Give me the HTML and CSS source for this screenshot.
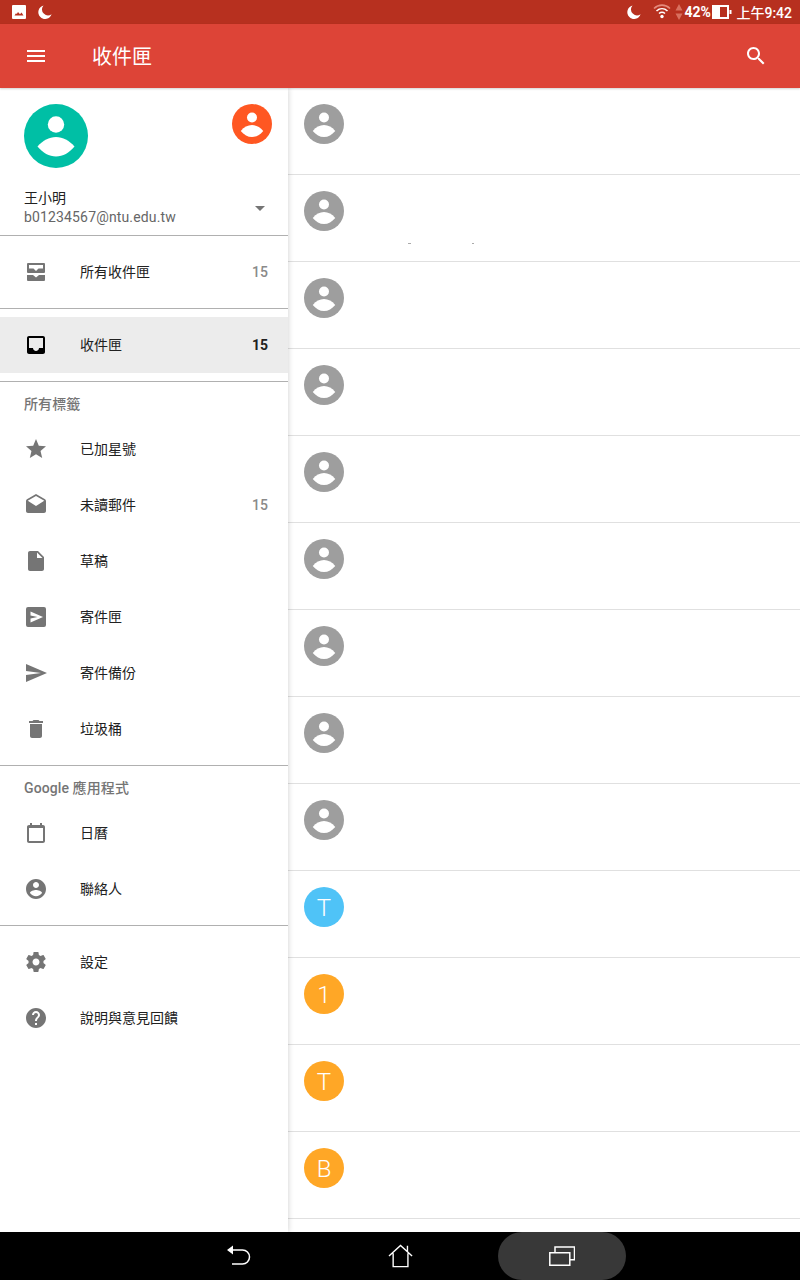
FILE: index.html
```html
<!DOCTYPE html>
<html lang="zh-Hant">
<head>
<meta charset="utf-8">
<title>收件匣</title>
<link rel="stylesheet" href="styles.css">
</head>
<body>
<svg class="defs" aria-hidden="true">
  <symbol id="person" viewBox="0 0 64 64">
    <circle cx="32" cy="20.500" r="8.200" fill="#fff"/>
    <path d="M13.500 42.500C19 36.500 25 33 32 33C39 33 45 36.500 50.500 42.500C45 49 39 52.500 32 52.500C25 52.500 19 49 13.500 42.500Z" fill="#fff"/>
  </symbol>
</svg>
<div class="app">
  <div class="status">
    <div class="status-left">
      <svg class="ico14" viewBox="0 0 14 14"><path fill="#fff" fill-rule="evenodd" d="M1 0h12a1 1 0 0 1 1 1v12a1 1 0 0 1-1 1H1a1 1 0 0 1-1-1V1a1 1 0 0 1 1-1zM2.500 10.500h9L9.500 7.500 8 9.200 6 7 4.800 9 4 8.300z"/></svg>
      <svg class="ico14" viewBox="0 0 14 14"><path fill="#fff" d="M5.500.6A6.800 6.800 0 1 0 13.600 9.300 6 6 0 0 1 5.500.6z"/></svg>
    </div>
    <div class="status-right">
      <svg class="ico14 moon-r" viewBox="0 0 14 14"><path fill="#fff" d="M5.500.6A6.800 6.800 0 1 0 13.600 9.300 6 6 0 0 1 5.500.6z"/></svg>
      <svg class="wifi" width="18" height="16" viewBox="0 0 18 16"><g fill="none" stroke-width="1.600"><path stroke="#e58a7c" d="M1 5.500C5.500 1 12.500 1 17 5.500"/><path stroke="#fff" d="M3.500 8C6.800 5 11.200 5 14.500 8"/><path stroke="#fff" d="M6 10.500C7.800 9 10.200 9 12 10.500"/></g><circle cx="9" cy="13.500" r="1.700" fill="#fff"/></svg>
      <svg class="updown" width="8" height="16" viewBox="0 0 8 16"><path fill="#d9705f" d="M4 0l3.500 6.500H.5zM4 16L.5 9.500h7z"/></svg>
      <span class="pct">42%</span>
      <svg class="batt" width="20" height="14" viewBox="0 0 20 14"><path fill="#fff" fill-rule="evenodd" d="M0 0h17v14H0zM8 2v10h7V2z"/><rect x="17.500" y="5" width="2" height="4" fill="#fff"/></svg>
      <span class="clock">上午9:42</span>
    </div>
  </div>
  <header class="toolbar">
    <svg class="tool-ico" viewBox="0 0 24 24"><path fill="#fff" d="M3 18h18v-2H3v2zm0-5h18v-2H3v2zm0-7v2h18V6H3z"/></svg>
    <h1 class="title">收件匣</h1>
    <svg class="tool-ico search" viewBox="0 0 24 24"><path fill="#fff" d="M15.500 14h-.79l-.28-.27C15.410 12.590 16 11.110 16 9.500 16 5.910 13.090 3 9.500 3S3 5.910 3 9.500 5.910 16 9.500 16c1.610 0 3.090-.59 4.230-1.570l.27.28v.79l5 4.990L20.490 19l-4.990-5zm-6 0C7.010 14 5 11.990 5 9.500S7.010 5 9.500 5 14 7.010 14 9.500 11.990 14 9.500 14z"/></svg>
  </header>
  <main class="body">
    <nav class="drawer">
      <div class="account">
        <div class="avatars">
          <svg class="av av-big teal"><use href="#person"/></svg>
          <svg class="av av-40 deep"><use href="#person"/></svg>
        </div>
        <div class="who">
          <div>
            <div class="name">王小明</div>
            <div class="mail">b01234567@ntu.edu.tw</div>
          </div>
          <span class="caret"></span>
        </div>
      </div>
      <div class="sec">
        <a class="item"><svg class="ni" viewBox="0 0 24 24"><path fill-rule="evenodd" d="M4 3h16a1 1 0 0 1 1 1v8a1 1 0 0 1-1 1H4a1 1 0 0 1-1-1V4a1 1 0 0 1 1-1zm1 2v3.500h4.500L12 11l2.500-2.500H19V5zM3 15h6l3 2.500 3-2.500h6v5a1 1 0 0 1-1 1H4a1 1 0 0 1-1-1z"/></svg><span class="lbl">所有收件匣</span><span class="cnt">15</span></a>
      </div>
      <div class="sec">
        <a class="item on"><svg class="ni" viewBox="0 0 24 24"><path d="M19 3H5c-1.100 0-2 .9-2 2v14c0 1.100.9 2 2 2h14c1.100 0 2-.9 2-2V5c0-1.100-.9-2-2-2zm0 12h-4c0 1.660-1.350 3-3 3s-3-1.340-3-3H5V5h14v10z"/></svg><span class="lbl">收件匣</span><span class="cnt">15</span></a>
      </div>
      <div class="sec sec-h">
        <div class="hd">所有標籤</div>
        <a class="item"><svg class="ni" viewBox="0 0 24 24"><path d="M12 17.270L18.180 21l-1.640-7.030L22 9.240l-7.190-.61L12 2 9.190 8.630 2 9.240l5.460 4.730L5.820 21z"/></svg><span class="lbl">已加星號</span></a>
        <a class="item"><svg class="ni" viewBox="0 0 24 24"><path d="M21.990 8c0-.72-.37-1.350-.94-1.700L12 1 2.950 6.300C2.380 6.650 2 7.280 2 8v10c0 1.100.9 2 2 2h16c1.100 0 2-.9 2-2l-.01-10zM12 13L3.740 7.840 12 3l8.260 4.840L12 13z"/></svg><span class="lbl">未讀郵件</span><span class="cnt">15</span></a>
        <a class="item"><svg class="ni" viewBox="0 0 24 24"><path d="M6 2c-1.100 0-1.990.9-1.990 2L4 20c0 1.100.89 2 1.990 2H18c1.100 0 2-.9 2-2V8l-6-6H6zm7 7V3.500L18.500 9H13z"/></svg><span class="lbl">草稿</span></a>
        <a class="item"><svg class="ni" viewBox="0 0 24 24"><path fill-rule="evenodd" d="M4 2h16a2 2 0 0 1 2 2v16a2 2 0 0 1-2 2H4a2 2 0 0 1-2-2V4a2 2 0 0 1 2-2zm2.500 4.500v4l7 1.500-7 1.500v4L19 12z"/></svg><span class="lbl">寄件匣</span></a>
        <a class="item"><svg class="ni" viewBox="0 0 24 24"><path d="M2.010 21L23 12 2.010 3 2 10l15 2-15 2z"/></svg><span class="lbl">寄件備份</span></a>
        <a class="item"><svg class="ni" viewBox="0 0 24 24"><path d="M6 19c0 1.100.9 2 2 2h8c1.100 0 2-.9 2-2V7H6v12zM19 4h-3.500l-1-1h-5l-1 1H5v2h14V4z"/></svg><span class="lbl">垃圾桶</span></a>
      </div>
      <div class="sec sec-h">
        <div class="hd">Google 應用程式</div>
        <a class="item"><svg class="ni" viewBox="0 0 24 24"><path d="M19 4h-1V2h-2v2H8V2H6v2H5C3.890 4 3 4.900 3 6v14c0 1.100.89 2 2 2h14c1.100 0 2-.9 2-2V6c0-1.100-.9-2-2-2zm0 16H5V7h14v13z"/></svg><span class="lbl">日曆</span></a>
        <a class="item"><svg class="ni" viewBox="0 0 24 24"><path d="M12 2C6.480 2 2 6.480 2 12s4.480 10 10 10 10-4.480 10-10S17.520 2 12 2zm0 3c1.660 0 3 1.340 3 3s-1.340 3-3 3-3-1.340-3-3 1.340-3 3-3zm0 14.200c-2.500 0-4.710-1.280-6-3.220.03-1.990 4-3.080 6-3.080 1.990 0 5.970 1.090 6 3.080-1.290 1.940-3.500 3.220-6 3.220z"/></svg><span class="lbl">聯絡人</span></a>
      </div>
      <div class="sec last">
        <a class="item"><svg class="ni" viewBox="0 0 24 24"><path d="M19.430 12.980c.04-.32.07-.64.07-.98s-.03-.66-.07-.98l2.110-1.650c.19-.15.24-.42.12-.64l-2-3.460c-.12-.22-.39-.3-.61-.22l-2.490 1c-.52-.4-1.080-.73-1.690-.98l-.38-2.650C14.460 2.180 14.250 2 14 2h-4c-.25 0-.46.18-.49.42l-.38 2.650c-.61.25-1.170.59-1.690.98l-2.490-1c-.23-.09-.49 0-.61.22l-2 3.460c-.13.22-.07.49.12.64l2.110 1.650c-.04.32-.07.65-.07.98s.03.66.07.98l-2.110 1.650c-.19.15-.24.42-.12.64l2 3.460c.12.22.39.3.61.22l2.490-1c.52.4 1.080.73 1.690.98l.38 2.650c.03.24.24.42.49.42h4c.25 0 .46-.18.49-.42l.38-2.650c.61-.25 1.170-.59 1.690-.98l2.490 1c.23.09.49 0 .61-.22l2-3.460c.12-.22.07-.49-.12-.64l-2.110-1.650zM12 15.500c-1.930 0-3.500-1.570-3.500-3.500s1.570-3.500 3.500-3.500 3.500 1.570 3.500 3.500-1.570 3.500-3.500 3.500z"/></svg><span class="lbl">設定</span></a>
        <a class="item"><svg class="ni" viewBox="0 0 24 24"><path d="M12 2C6.480 2 2 6.480 2 12s4.480 10 10 10 10-4.480 10-10S17.520 2 12 2zm1 17h-2v-2h2v2zm2.070-7.750l-.9.92C13.450 12.900 13 13.500 13 15h-2v-.5c0-1.100.45-2.100 1.170-2.830l1.240-1.260c.37-.36.59-.86.59-1.410 0-1.100-.9-2-2-2s-2 .9-2 2H8c0-2.210 1.790-4 4-4s4 1.790 4 4c0 .88-.36 1.680-.93 2.250z"/></svg><span class="lbl">說明與意見回饋</span></a>
      </div>
    </nav>
    <section class="list">
      <div class="row"><svg class="av av-40 gray"><use href="#person"/></svg></div>
      <div class="row"><svg class="av av-40 gray"><use href="#person"/></svg><i class="speck s1"></i><i class="speck s2"></i></div>
      <div class="row"><svg class="av av-40 gray"><use href="#person"/></svg></div>
      <div class="row"><svg class="av av-40 gray"><use href="#person"/></svg></div>
      <div class="row"><svg class="av av-40 gray"><use href="#person"/></svg></div>
      <div class="row"><svg class="av av-40 gray"><use href="#person"/></svg></div>
      <div class="row"><svg class="av av-40 gray"><use href="#person"/></svg></div>
      <div class="row"><svg class="av av-40 gray"><use href="#person"/></svg></div>
      <div class="row"><svg class="av av-40 gray"><use href="#person"/></svg></div>
      <div class="row"><span class="av av-40 blue">T</span></div>
      <div class="row"><span class="av av-40 amber">1</span></div>
      <div class="row"><span class="av av-40 amber">T</span></div>
      <div class="row"><span class="av av-40 amber">B</span></div>
      <div class="row"></div>
    </section>
  </main>
  <footer class="navbar">
    <svg class="nb back" width="26" height="26" viewBox="0 0 26 26"><path fill="#fff" d="M1 5l6-4.500v9z"/><path fill="none" stroke="#fff" stroke-width="1.500" d="M6 5h10.500a6.500 6.500 0 0 1 0 14H6"/></svg>
    <svg class="nb home" width="26" height="24" viewBox="0 0 28 26"><path fill="none" stroke="#fff" stroke-width="1.500" d="M1 13L13.500 1.500 26 13M5.500 10v14.500h16V10M21 2v6"/></svg>
    <div class="recent">
      <svg width="26" height="20" viewBox="0 0 26 20"><path fill="none" stroke="#fff" stroke-width="1.500" d="M.8 6.800h20v12.400H.8zM6 6.500V1h19.500v12.800H21"/></svg>
    </div>
  </footer>
</div>
</body>
</html>
```
FILE: styles.css
```css
* { box-sizing: border-box; }
html, body { margin: 0; padding: 0; background: #fff; }
body { font-family: Roboto, "Noto Sans CJK TC", sans-serif; }
.defs { position: absolute; width: 0; height: 0; }
.app { width: 800px; height: 1280px; display: flex; flex-direction: column; overflow: hidden; }

.status { height: 24px; flex: none; background: #b7301f; color: #fff; display: flex; justify-content: space-between; align-items: center; padding: 0 8px 0 12px; }
.status-left { display: flex; gap: 12px; }
.status-right { display: flex; align-items: center; }
.ico14 { width: 14px; height: 14px; display: block; }
.moon-r { margin-right: 12px; }
.wifi { display: block; margin-top: -2px; }
.updown { display: block; margin-left: 4px; }
.pct { font-size: 14px; font-weight: 700; margin-left: 1px; width: 28px; }
.batt { display: block; }
.clock { font-size: 14px; font-weight: 500; margin-left: 4px; margin-bottom: 1px; }

.toolbar { height: 64px; flex: none; background: #dd4437; display: flex; align-items: center; padding: 0 32px 0 24px; position: relative; z-index: 3; box-shadow: 0 1px 2px rgba(0,0,0,.18); }
.tool-ico { width: 24px; height: 24px; display: block; }
.search { margin-left: auto; }
.title { margin: 0 0 2px 44px; font-size: 20px; font-weight: 400; color: #fff; }

.body { flex: 1; min-height: 0; display: flex; overflow: hidden; }
.drawer { width: 288px; flex: none; background: #fff; position: relative; z-index: 2; box-shadow: 0 0 6px rgba(0,0,0,.2); }
.account { height: 148px; padding: 16px 0 0 24px; border-bottom: 1px solid #b0b0b0; }
.avatars { display: flex; justify-content: space-between; align-items: flex-start; padding-right: 16px; }
.av { display: flex; align-items: center; justify-content: center; border-radius: 50%; flex: none; color: #fff; }
.av-big { width: 64px; height: 64px; }
.av-40 { width: 40px; height: 40px; font-size: 24px; font-weight: 300; padding-top: 1px; }
.teal { background: #00bfa5; }
.deep { background: #ff5722; }
.gray { background: #9e9e9e; }
.blue { background: #4fc3f7; }
.amber { background: #ffa726; }
.who { display: flex; justify-content: space-between; align-items: center; margin-top: 20px; padding-right: 23px; }
.name { font-size: 14px; line-height: 20px; color: #212121; }
.mail { font-size: 14px; line-height: 18px; color: #666; letter-spacing: .15px; }
.caret { width: 0; height: 0; border: 5px solid transparent; border-top-color: #757575; border-bottom: 0; margin-top: 3px; }

.sec { padding: 8px 0; border-bottom: 1px solid #b0b0b0; }
.sec-h { padding-top: 0; }
.sec.last { border-bottom: 0; }
.hd { height: 39px; padding: 12px 0 0 24px; font-size: 14px; line-height: 20px; color: #757575; letter-spacing: .1px; }
.sec-h .hd { font-weight: 500; }
.item { height: 56px; display: flex; align-items: center; padding: 0 20px 0 24px; color: #212121; font-size: 14px; }
.ni { width: 24px; height: 24px; fill: #757575; flex: none; display: block; }
.lbl { margin-left: 32px; margin-bottom: 2px; }
.cnt { margin-left: auto; font-weight: 500; color: #8a8a8a; }
.on { background: #ececec; }
.on .ni { fill: #000; }
.on .cnt { font-weight: 700; color: #212121; }

.list { flex: 1; min-width: 0; }
.row { height: 87px; padding: 16px 0 0 16px; border-bottom: 1px solid #e0e0e0; position: relative; }
.speck { position: absolute; top: 68px; height: 1px; background: #aaa; }
.s1 { left: 120px; width: 3px; }
.s2 { left: 184px; width: 2px; }

.navbar { height: 48px; flex: none; background: #000; display: flex; align-items: center; padding-left: 226px; }
.nb { display: block; }
.back { margin-top: 4px; }
.home { margin-left: 136px; }
.recent { width: 128px; height: 48px; margin-left: 84px; background: #383838; border-radius: 24px; display: flex; align-items: center; justify-content: center; }
```
